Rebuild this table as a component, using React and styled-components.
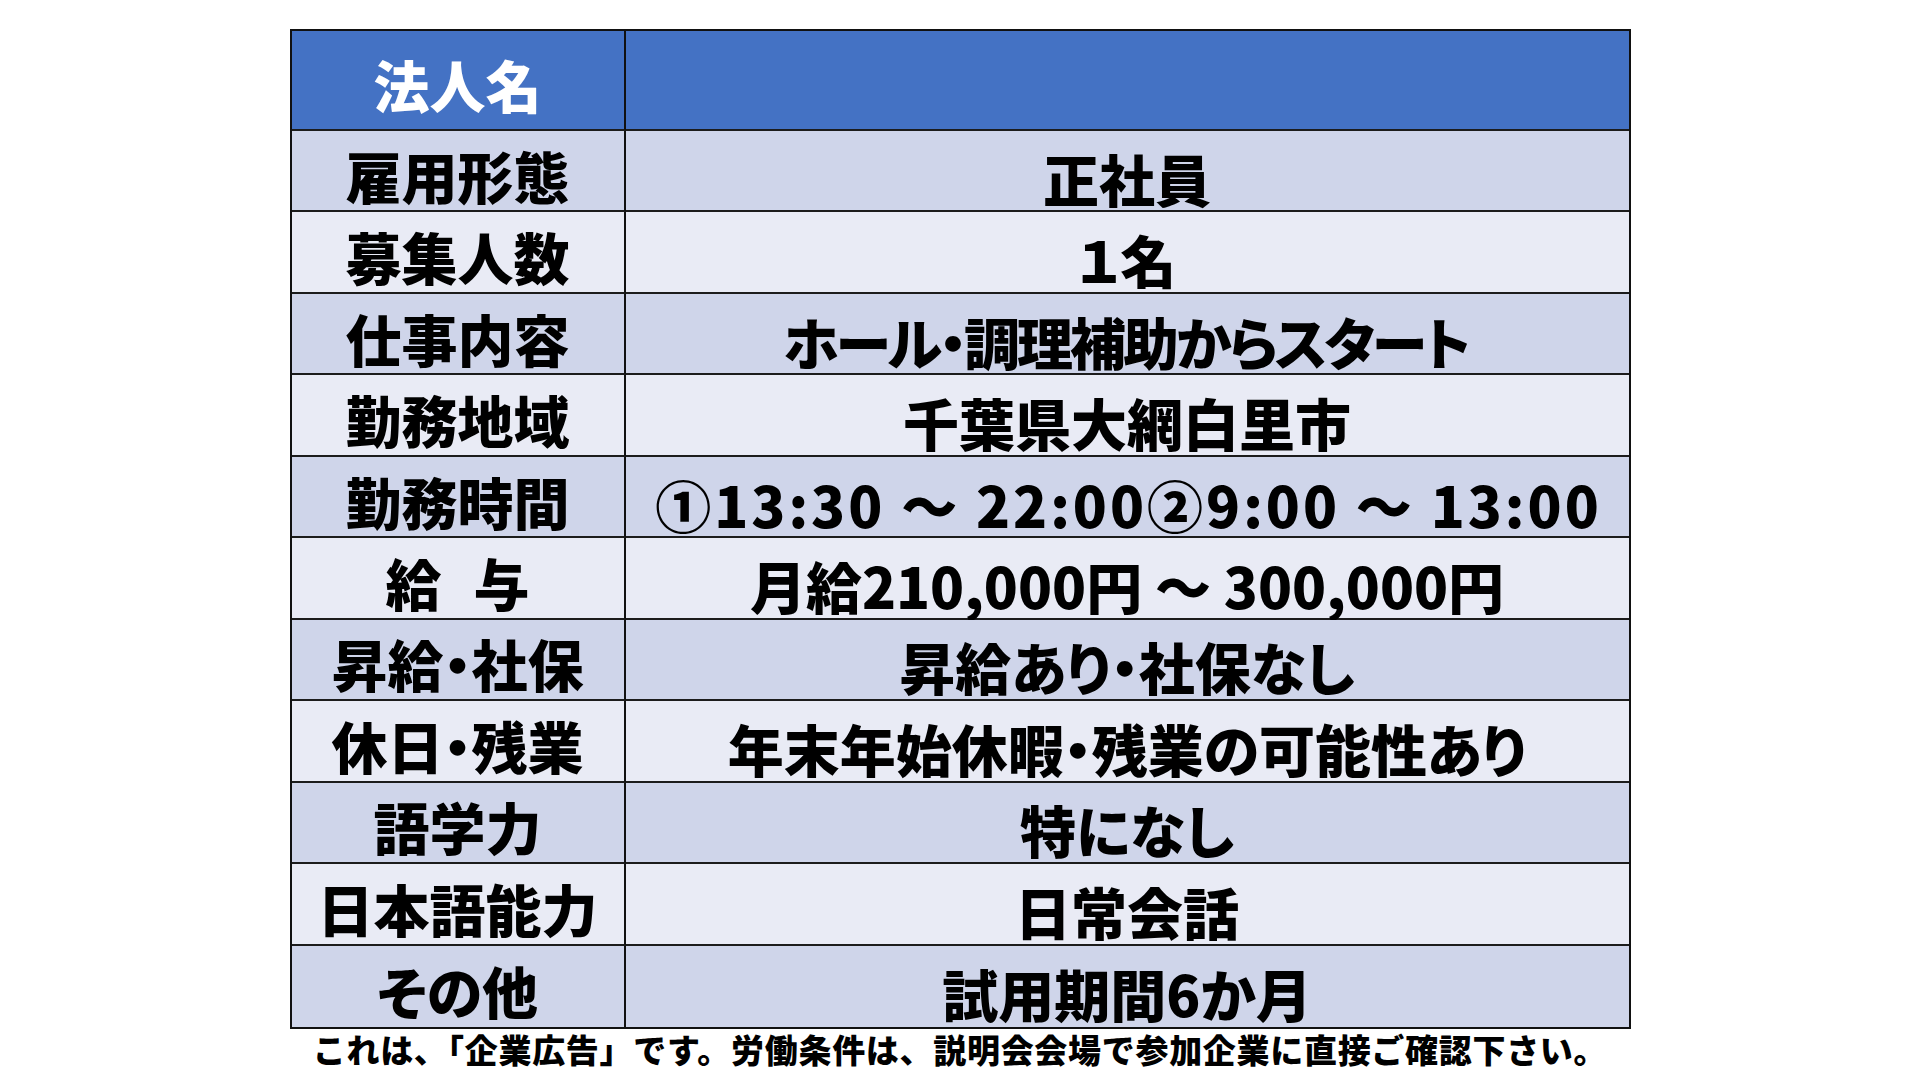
import React from 'react';
import styled, { createGlobalStyle } from 'styled-components';

const GlobalStyle = createGlobalStyle`
	html, body {
		margin: 0;
		padding: 0;
		background: #ffffff;
	}
	body {
		font-family: 'Noto Sans CJK JP', 'Noto Sans', sans-serif;
		color: #000;
	}
`;

const Page = styled.main`
	width: 1920px;
	height: 1080px;
	display: flex;
	flex-direction: column;
	align-items: center;
	padding-top: 29px;
	box-sizing: border-box;
`;

const Sheet = styled.section`
	width: 1341px;
	height: 1000px;
	box-sizing: border-box;
	border: 2px solid #111;
	display: grid;
	grid-template-columns: 334px 1fr;
	grid-template-rows: 100px repeat(11, 1fr);
`;

const Cell = styled.div`
	display: flex;
	align-items: center;
	justify-content: center;
	box-sizing: border-box;
	background: ${(p) => (p.$head ? '#4472c4' : p.$dark ? '#cfd5ea' : '#e9ebf5')};
	color: ${(p) => (p.$head ? '#ffffff' : '#000000')};
	border-right: ${(p) => (p.$label ? '2px solid #111' : 'none')};
	border-bottom: ${(p) => (p.$last ? 'none' : '2px solid #1c1c1c')};
	font-size: 56px;
	font-weight: 900;
	line-height: 1;
	white-space: nowrap;
	padding-top: ${(p) => (p.$label ? '8px' : '14px')};
`;

const Text = styled.span`
	font-feature-settings: 'palt';
	letter-spacing: ${(p) => p.$spacing || '0px'};
	margin-right: calc(${(p) => p.$spacing || '0px'} * -1);
`;

const Note = styled.p`
	margin: 3px 0 0;
	font-size: 33px;
	font-weight: 900;
	line-height: 34px;
	letter-spacing: 0.7px;
`;

const rows = [
	{ label: '雇用形態', value: '正社員' },
	{ label: '募集人数', value: '１名' },
	{ label: '仕事内容', value: 'ホール・調理補助からスタート', valueSpacing: '-3px' },
	{ label: '勤務地域', value: '千葉県大網白里市' },
	{ label: '勤務時間', value: '①13:30 ～ 22:00②9:00 ～ 13:00', valueSpacing: '3px' },
	{ label: '給　与', value: '月給210,000円 ～ 300,000円', labelSpacing: '-12px' },
	{ label: '昇給・社保', value: '昇給あり・社保なし' },
	{ label: '休日・残業', value: '年末年始休暇・残業の可能性あり' },
	{ label: '語学力', value: '特になし' },
	{ label: '日本語能力', value: '日常会話' },
	{ label: 'その他', value: '試用期間6か月' },
];

export default function App() {
	return (
		<>
			<GlobalStyle />
			<Page>
				<Sheet>
					<Cell $head $label>
						<Text>法人名</Text>
					</Cell>
					<Cell $head></Cell>
					{rows.map((row, i) => {
						const dark = i % 2 === 0;
						const last = i === rows.length - 1;
						return (
							<React.Fragment key={row.label}>
								<Cell $label $dark={dark} $last={last}>
									<Text $spacing={row.labelSpacing}>{row.label}</Text>
								</Cell>
								<Cell $dark={dark} $last={last}>
									<Text $spacing={row.valueSpacing}>{row.value}</Text>
								</Cell>
							</React.Fragment>
						);
					})}
				</Sheet>
				<Note>これは、「企業広告」です。労働条件は、説明会会場で参加企業に直接ご確認下さい。</Note>
			</Page>
		</>
	);
}
